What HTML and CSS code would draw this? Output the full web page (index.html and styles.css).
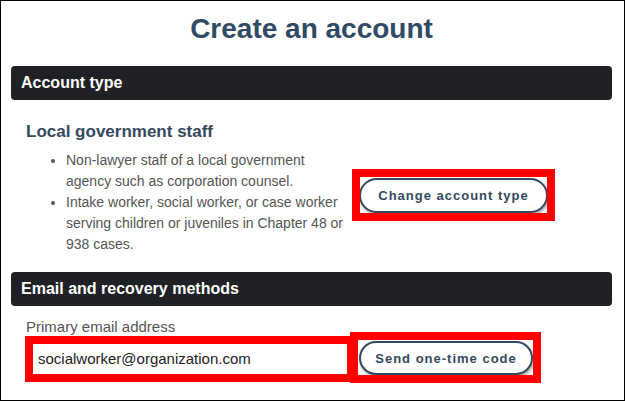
FILE: index.html
```html
<!DOCTYPE html>
<html lang="en">
<head>
<meta charset="utf-8">
<title>Create an account</title>
<link rel="stylesheet" href="styles.css">
</head>
<body>
<div class="page">
  <h1 class="title">Create an account</h1>

  <section class="section">
    <div class="bar">Account type</div>
    <div class="type-row">
      <div class="type-info">
        <h2 class="type-name">Local government staff</h2>
        <ul class="type-list">
          <li>Non-lawyer staff of a local government agency such as corporation counsel.</li>
          <li>Intake worker, social worker, or case worker serving children or juveniles in Chapter 48 or 938 cases.</li>
        </ul>
      </div>
      <div class="type-action">
        <button class="btn btn-change mark mark-change">Change account type</button>
      </div>
    </div>
  </section>

  <section class="section">
    <div class="bar bar-email">Email and recovery methods</div>
    <div class="email-block">
      <label class="field-label" for="email">Primary email address</label>
      <div class="email-row">
        <div class="email-input mark mark-input" id="email">socialworker@organization.com</div>
        <button class="btn btn-send mark mark-send">Send one-time code</button>
      </div>
    </div>
  </section>
</div>
</body>
</html>
```

FILE: styles.css
```css
html, body {
  margin: 0;
  padding: 0;
  background: #fff;
}

.page {
  width: 625px;
  height: 401px;
  box-sizing: border-box;
  border: 1px solid #000;
  padding: 0 12px 0 10px;
  overflow: hidden;
  font-family: "Liberation Sans", Arial, sans-serif;
}

.title {
  margin: 11px 0 20px;
  font-size: 28px;
  line-height: 34px;
  font-weight: bold;
  color: #2f4a64;
  text-align: center;
}

.bar {
  height: 34px;
  display: flex;
  align-items: center;
  padding-left: 10px;
  background: #202125;
  border-radius: 4px;
  color: #fff;
  font-size: 16px;
  font-weight: bold;
}

.bar-email {
  margin-top: 17px;
}

.type-row {
  display: flex;
  padding-left: 15px;
}

.type-info {
  width: 325px;
}

.type-name {
  margin: 22px 0 0;
  font-size: 17px;
  line-height: 20px;
  font-weight: bold;
  color: #34495e;
}

.type-list {
  margin: 8px 0 0;
  padding-left: 40px;
  font-size: 14px;
  line-height: 21px;
  color: #555;
}

.type-action {
  margin-left: 8px;
  padding-top: 78px;
}

.btn {
  display: flex;
  align-items: center;
  justify-content: center;
  box-sizing: border-box;
  background: #fff;
  border: 2px solid #34495e;
  border-radius: 20px;
  color: #34495e;
  font-family: "Liberation Sans", Arial, sans-serif;
  font-size: 13px;
  font-weight: bold;
  letter-spacing: 1px;
  box-shadow: 1px 2px 3px rgba(0, 0, 0, 0.35);
  padding: 0;
  cursor: pointer;
}

.btn-change {
  width: 189px;
  height: 35px;
}

.btn-send {
  width: 174px;
  height: 34px;
  margin-left: 12px;
}

/* red annotation frames drawn over the marked controls */
.mark {
  position: relative;
}

.mark::after {
  content: "";
  position: absolute;
  border: 8px solid #ff0000;
  pointer-events: none;
}

.mark-change::after {
  top: -11px;
  bottom: -10px;
  left: -9px;
  right: -9px;
}

.mark-send::after {
  top: -11px;
  bottom: -10px;
  left: -11px;
  right: -10px;
}

.mark-input::after {
  top: -7px;
  bottom: -9px;
  left: -7px;
  right: -8px;
}

.email-block {
  padding-left: 15px;
}

.field-label {
  display: block;
  margin-top: 12px;
  font-size: 15px;
  line-height: 18px;
  color: #555;
}

.email-row {
  display: flex;
  align-items: center;
  margin-top: 5px;
}

.email-input {
  width: 315px;
  height: 30px;
  box-sizing: border-box;
  margin-left: 6px;
  padding-left: 6px;
  display: flex;
  align-items: center;
  background: #fff;
  font-size: 15px;
  color: #222;
}
```
